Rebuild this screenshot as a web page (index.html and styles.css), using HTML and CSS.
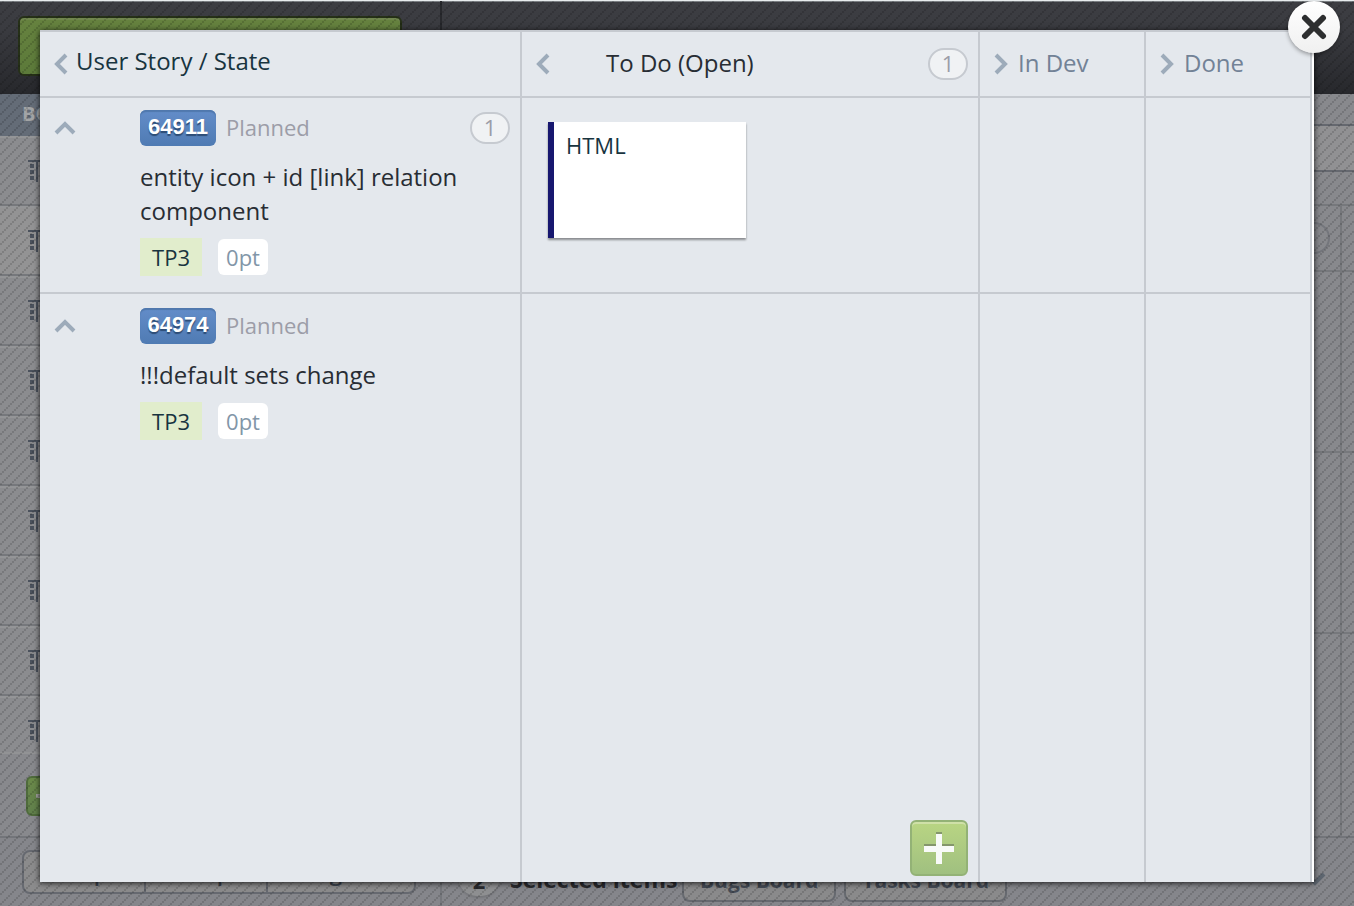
FILE: index.html
```html
<!DOCTYPE html>
<html lang="en">
<head>
<meta charset="utf-8">
<title>Board</title>
<link rel="stylesheet" href="styles.css">
</head>
<body>
<svg class="defs" width="0" height="0" aria-hidden="true">
  <symbol id="chev-left" viewBox="0 0 14 22"><path d="M12 2 3 11l9 9" fill="none" stroke="currentColor" stroke-width="4"/></symbol>
  <symbol id="chev-right" viewBox="0 0 14 22"><path d="M2 2l9 9-9 9" fill="none" stroke="currentColor" stroke-width="4"/></symbol>
  <symbol id="chev-up" viewBox="0 0 22 14"><path d="M2 12l9-9 9 9" fill="none" stroke="currentColor" stroke-width="4"/></symbol>
  <symbol id="board" viewBox="0 0 22 22"><path d="M0 0h22v2H0zM8 2h2v20H8zM2 4h4v4H2zm0 6h4v4H2zm0 6h4v4H2zM12 4h4v4h-4zm0 6h4v4h-4z" fill="currentColor"/></symbol>
</svg>

<div class="app">
  <header class="topbar">
    <div class="topbar-side"><button class="primary" type="button" aria-label="Add"></button></div>
  </header>
  <div class="main">
    <nav class="side">
      <h2 class="side-title">BOARDS</h2>
      <ul class="side-list">
        <li><svg><use href="#board"/></svg></li>
        <li class="current"><svg><use href="#board"/></svg></li>
        <li><svg><use href="#board"/></svg></li>
        <li><svg><use href="#board"/></svg></li>
        <li><svg><use href="#board"/></svg></li>
        <li><svg><use href="#board"/></svg></li>
        <li><svg><use href="#board"/></svg></li>
        <li><svg><use href="#board"/></svg></li>
        <li><svg><use href="#board"/></svg></li>
      </ul>
      <div class="side-add"><button class="side-plus" type="button" aria-label="Add board"><svg viewBox="0 0 20 20"><path d="M0 8h20v4H0zM8 0h4v20H8z" fill="#a0a29c"/></svg></button></div>
    </nav>
    <section class="content">
      <div class="band"></div>
      <div class="band band-light"></div>
      <div class="band band-head"></div>
      <div class="grid">
        <div class="grid-row first"><span class="ring"></span></div>
        <div class="grid-row tall"></div>
        <div class="grid-row tall"></div>
        <div class="grid-row last"></div>
      </div>
    </section>
  </div>
  <footer class="footer">
    <div class="footer-side">
      <div class="group">
        <button type="button">Map</button><button type="button">Help</button><button type="button">Agile</button>
      </div>
    </div>
    <div class="footer-main">
      <span class="picked">2</span>
      <span class="picked-label">Selected items</span>
      <button class="foot-btn" type="button">Bugs Board</button>
      <button class="foot-btn" type="button">Tasks Board</button>
      <svg class="tick" viewBox="0 0 24 14"><path d="M8 6l5 5 9-9" fill="none" stroke="#5e6670" stroke-width="4"/></svg>
    </div>
  </footer>
</div>

<svg class="hatch" aria-hidden="true">
  <defs><pattern id="lines" width="10" height="10" patternUnits="userSpaceOnUse"><path d="M0 2h2v2H0zM2 0h2v2H2zM4 8h2v2H4zM6 6h2v2H6zM8 4h2v2H8z"/></pattern></defs>
  <rect width="100%" height="100%" fill="url(#lines)"/>
</svg>

<div class="modal" role="dialog" aria-label="User stories by state">
  <table class="states">
    <colgroup><col class="c-story"><col><col class="c-narrow"><col class="c-narrow"></colgroup>
    <thead>
      <tr>
        <th><div class="head"><button class="chev" type="button" aria-label="Collapse stories"><svg class="v"><use href="#chev-left"/></svg></button><span class="head-story">User Story / State</span></div></th>
        <th><div class="head"><button class="chev" type="button" aria-label="Collapse To Do"><svg class="v"><use href="#chev-left"/></svg></button><span class="head-open">To Do (Open)</span><span class="count">1</span></div></th>
        <th><div class="head folded"><button class="chev" type="button" aria-label="Expand In Dev"><svg class="v"><use href="#chev-right"/></svg></button><span>In Dev</span></div></th>
        <th><div class="head folded"><button class="chev" type="button" aria-label="Expand Done"><svg class="v"><use href="#chev-right"/></svg></button><span>Done</span></div></th>
      </tr>
    </thead>
    <tbody>
      <tr class="row-first">
        <td>
          <div class="story">
            <button class="chev fold" type="button" aria-label="Collapse row"><svg class="h"><use href="#chev-up"/></svg></button>
            <div class="story-body">
              <div class="story-top"><a class="id" href="#64911">64911</a><span class="state">Planned</span><span class="count">1</span></div>
              <div class="name">entity icon + id [link] relation component</div>
              <div class="tags"><span class="tag">TP3</span><span class="points">0pt</span></div>
            </div>
          </div>
        </td>
        <td class="cards"><div class="card">HTML</div></td>
        <td></td><td></td>
      </tr>
      <tr class="row-rest">
        <td>
          <div class="story">
            <button class="chev fold" type="button" aria-label="Collapse row"><svg class="h"><use href="#chev-up"/></svg></button>
            <div class="story-body">
              <div class="story-top"><a class="id" href="#64974">64974</a><span class="state">Planned</span></div>
              <div class="name">!!!default sets change</div>
              <div class="tags"><span class="tag">TP3</span><span class="points">0pt</span></div>
            </div>
          </div>
        </td>
        <td class="adder"><button class="add" type="button" aria-label="Add card"><svg viewBox="0 0 30 32"><path d="M0 12h30v4H0zM12 0h6v6h-6z" fill="#84966c"/><path d="M0 14h30v6H0zM12 2h6v30h-6z" fill="#f8faf8"/></svg></button></td>
        <td></td><td></td>
      </tr>
    </tbody>
  </table>
  <button class="close" type="button" aria-label="Close"><svg viewBox="0 0 26 26"><path d="M4 4l18 18M22 4 4 22" stroke="#2d2e2f" stroke-width="6" stroke-linecap="round"/></svg></button>
</div>
</body>
</html>
```
FILE: styles.css
```css
* { box-sizing: border-box; }
body { margin: 0; font-family: "Open Sans", "Liberation Sans", sans-serif; font-size: 22px; color: #282d34; background: #88898d; }
button { font: inherit; color: inherit; margin: 0; padding: 0; border: 0; background: none; }
.defs { position: absolute; }

/* Page behind the dialog */
.app { display: flex; flex-direction: column; height: 100vh; overflow: hidden; }
.topbar { flex: 0 0 94px; border-top: 1px solid #e8ecee; background: linear-gradient(#3d3e43, #3a3b40 30%, #27282c); box-shadow: inset 0 1px #7c8084; }
.topbar-side { width: 442px; height: 93px; padding: 15px 38px 18px 18px; border-right: 2px solid #28292d; }
.primary { display: block; width: 100%; height: 60px; border: 2px solid #263018; border-radius: 6px; background: linear-gradient(#66823f, #5c7a3a); box-shadow: inset 0 2px #71864f; }
.main { flex: 1; display: flex; min-height: 0; }
.side { flex: 0 0 442px; }
.side-title { margin: 0; height: 42px; padding-left: 22px; font-size: 20px; line-height: 40px; color: #a2a4a6; background: #646c77; }
.side-list { margin: 0; padding: 0; list-style: none; }
.side-list li { height: 70px; padding: 22px 28px; border-top: 2px solid #949597; border-bottom: 2px solid #76787c; color: #4b525d; background: #8b8c8f; }
.side-list li.current { background: #939394; }
.side-list li:last-child { height: 56px; border-bottom: 0; }
.side-list svg { display: block; width: 22px; height: 22px; }
.side-add { height: 84px; padding: 22px 26px; border-top: 2px solid #929395; }
.side-plus { width: 58px; height: 40px; border: 2px solid #4f6b3c; border-radius: 6px; background: linear-gradient(#6b8a4a, #61804c); }
.side-plus svg { display: block; width: 20px; height: 20px; margin-left: 8px; }
.content { flex: 1; display: flex; flex-direction: column; }
.band { flex: 0 0 32px; border-bottom: 2px solid #65686f; background: #88898d; }
.band-light { flex-basis: 46px; background: #919193; }
.band-head { flex-basis: 34px; border-color: #76787c; }
.grid { flex: 1; margin-right: 12px; border-right: 2px solid #76787c; box-shadow: 12px 0 #88898d; }
.grid-row { height: 180px; margin-right: -14px; border-bottom: 2px solid #76787c; }
.grid-row.tall { height: 181px; }
.grid-row.first { height: 66px; padding: 16px 24px; text-align: right; }
.grid-row.last { height: 210px; }
.ring { display: inline-block; width: 40px; height: 32px; border: 2px solid #74767c; border-radius: 16px; }
.footer { flex: 0 0 70px; display: flex; border-top: 2px solid #73757a; background: #85868b; }
.footer-side { flex: 0 0 442px; padding: 12px 24px 12px 22px; border-right: 2px solid #75777c; }
.group { display: flex; height: 44px; border: 2px solid #666970; border-radius: 8px; background: #8b8b8c; color: #3f4650; font-weight: 600; }
.group button { flex: 0 0 122px; border-right: 2px solid #666970; }
.group button:last-child { flex: 1; border: 0; }
.footer-main { flex: 1; display: flex; align-items: flex-start; padding: 20px 28px 0 16px; }
.picked { width: 42px; height: 38px; border-radius: 20px; background: #8e8f91; box-shadow: 0 2px 2px #75767a; color: #2b2c30; font-weight: 700; text-align: center; line-height: 44px; }
.picked-label { width: 172px; margin-left: 10px; color: #2b2c30; font-size: 23px; font-weight: 700; line-height: 42px; white-space: nowrap; }
.foot-btn { height: 44px; margin-right: 8px; padding: 0 16px; border: 2px solid #66696f; border-radius: 8px; background: #8a8a8b; color: #454b55; font-size: 21px; font-weight: 700; line-height: 40px; }
.tick { width: 24px; height: 14px; margin: 14px 0 0 auto; }
.hatch { position: absolute; top: 1px; left: 0; width: 100%; height: calc(100% - 1px); opacity: .13; }

/* Dialog */
.modal { position: absolute; top: 30px; right: 40px; bottom: 24px; left: 40px; border-top: 2px solid #c6cad0; border-right: 2px solid #fff; background: #e4e8ed; box-shadow: 0 1px 6px rgba(0, 0, 0, .8); }
.states { width: 100%; height: 100%; table-layout: fixed; border-collapse: separate; border-spacing: 0; }
.c-story { width: 482px; }
.c-narrow { width: 166px; }
.states th, .states td { padding: 0; border-right: 2px solid #c6cad0; border-bottom: 2px solid #c6cad0; vertical-align: top; text-align: left; font-weight: 400; }
.states tr:last-child td { border-bottom: 0; }
.states thead tr { height: 66px; }
.states thead th { border-bottom: 2px solid #c6cad0; }
.row-first { height: 196px; }
.head { display: flex; align-items: center; height: 64px; padding: 0 10px 0 14px; font-size: 24px; line-height: 32px; }
.head > span:not(.count) { padding-bottom: 2px; }
.head > .head-story:not(.count) { margin-left: 8px; padding-bottom: 6px; color: #18343f; }
.head-open { margin-left: 56px; }
.folded { color: #728296; }
.folded span { margin-left: 10px; }
.chev { display: block; color: #9dabba; }
.chev svg { display: block; }
.v { width: 14px; height: 22px; }
.h { width: 22px; height: 14px; }
.count { width: 40px; height: 32px; margin-left: auto; border: 2px solid #c6cad0; border-radius: 16px; background: #f0f2f4; color: #9c9da8; font-size: 22px; font-weight: 500; line-height: 26px; text-align: center; }
.story { display: flex; padding: 12px 10px 12px 14px; }
.row-rest .story { padding-top: 14px; }
.fold { align-self: flex-start; margin: 11px 64px 0 0; }
.story-body { flex: 1; }
.story-top { display: flex; align-items: center; height: 36px; }
.id { width: 76px; height: 36px; border-radius: 6px; background: linear-gradient(#638dc9, #4f7bb3); box-shadow: inset 0 2px 1px #5078ad; color: #fff; font: 700 22px/34px "Liberation Sans", sans-serif; text-align: center; text-decoration: none; text-shadow: 0 2px 1px #2d4c75; }
.state { margin-left: 10px; padding-bottom: 2px; color: #9c9da8; font-weight: 500; }
.name { max-width: 330px; margin-top: 14px; font-size: 24px; line-height: 34px; }
.tags { display: flex; align-items: center; gap: 16px; margin-top: 10px; }
.tag { width: 62px; height: 38px; background: #e1edcc; color: #18343f; line-height: 38px; text-align: center; }
.points { width: 50px; height: 36px; border-radius: 6px; background: #fff; color: #8296a8; font-weight: 500; line-height: 36px; text-align: center; }
.states .cards { padding: 24px 26px; }
.card { width: 198px; height: 116px; padding: 8px 12px; border-left: 6px solid #17176f; background: #fff; box-shadow: 0 2px 2px rgba(0, 0, 0, .4); color: #18343f; line-height: 30px; }
.states .adder { padding: 0 10px 6px; vertical-align: bottom; text-align: right; }
.add { display: block; width: 58px; height: 56px; margin-left: auto; padding: 0 12px; border: 2px solid #93b276; border-radius: 6px; background: linear-gradient(#b9d583, #a0c080); box-shadow: inset 0 2px #cfe0a8; }
.add svg { display: block; width: 30px; height: 32px; }
.close { position: absolute; top: -31px; right: -28px; display: flex; align-items: center; justify-content: center; width: 52px; height: 52px; border-radius: 50%; background: linear-gradient(#fff, #f0f0f0); box-shadow: 0 2px 4px rgba(0, 0, 0, .35); }
.close svg { width: 26px; height: 26px; }
```
